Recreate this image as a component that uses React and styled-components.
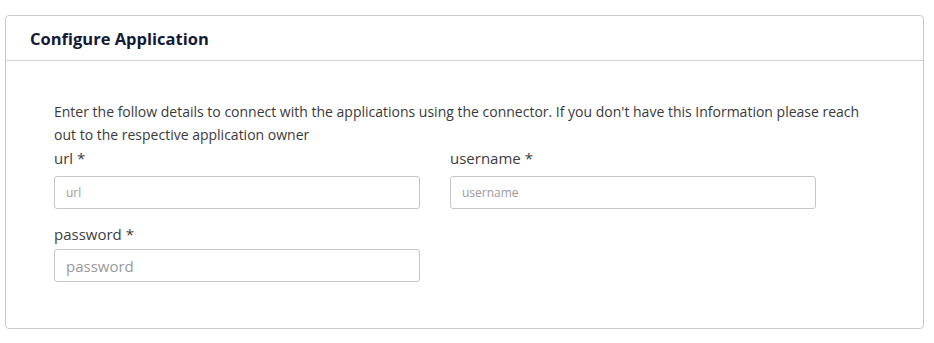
import React from "react";
import styled, { createGlobalStyle } from "styled-components";

const GlobalStyle = createGlobalStyle`
  body {
    margin: 0;
    background: #ffffff;
    font-family: "Open Sans", "Liberation Sans", sans-serif;
  }
`;

const Page = styled("div")`
  padding: 15px 10px 14px 5px;
`;

const Card = styled("div")`
  border: 1px solid #c9c9c9;
  border-radius: 4px;
  background: #ffffff;
`;

const CardHeader = styled("div")`
  height: 44px;
  padding: 0 24px;
  display: flex;
  align-items: center;
  border-bottom: 1px solid #d4d4d4;
`;

const Title = styled("h2")`
  margin: 0;
  font-size: 16.5px;
  font-weight: 700;
  color: #141a36;
`;

const CardBody = styled("div")`
  padding: 39px 50px 46px 48px;
`;

const Intro = styled("p")`
  margin: 0 0 2px;
  font-size: 14px;
  line-height: 23px;
  color: #3a3a3a;
`;

const FieldGrid = styled("div")`
  display: grid;
  grid-template-columns: 366px 366px;
  column-gap: 30px;
  row-gap: 15px;
`;

const FieldBox = styled("div")`
  display: flex;
  flex-direction: column;
`;

const Label = styled("label")`
  font-size: 15px;
  line-height: 20px;
  color: #3d3d3d;
  margin-bottom: ${({ $gap }) => $gap}px;
`;

const Input = styled("input")`
  box-sizing: border-box;
  width: 100%;
  height: 33px;
  padding: 0 11px;
  border: 1px solid #c6c6c6;
  border-radius: 3px;
  font-family: "Open Sans", "Liberation Sans", sans-serif;
  font-size: ${({ $size }) => $size}px;
  color: #333;
  outline: none;

  &::placeholder {
    color: #9a9a9a;
  }
`;

const fields = [
  { name: "url", size: 12, gap: 8 },
  { name: "username", size: 12, gap: 8 },
  { name: "password", size: 15, gap: 5, type: "password" },
];

const App = () => (
  <Page>
    <GlobalStyle />
    <Card>
      <CardHeader>
        <Title>Configure Application</Title>
      </CardHeader>
      <CardBody>
        <Intro>
          Enter the follow details to connect with the applications using the connector. If you don't have this
          Information please reach out to the respective application owner
        </Intro>
        <FieldGrid>
          {fields.map((f) => (
            <FieldBox key={f.name}>
              <Label htmlFor={f.name} $gap={f.gap}>
                {f.name} *
              </Label>
              <Input id={f.name} type={f.type || "text"} placeholder={f.name} $size={f.size} />
            </FieldBox>
          ))}
        </FieldGrid>
      </CardBody>
    </Card>
  </Page>
);

export default App;
